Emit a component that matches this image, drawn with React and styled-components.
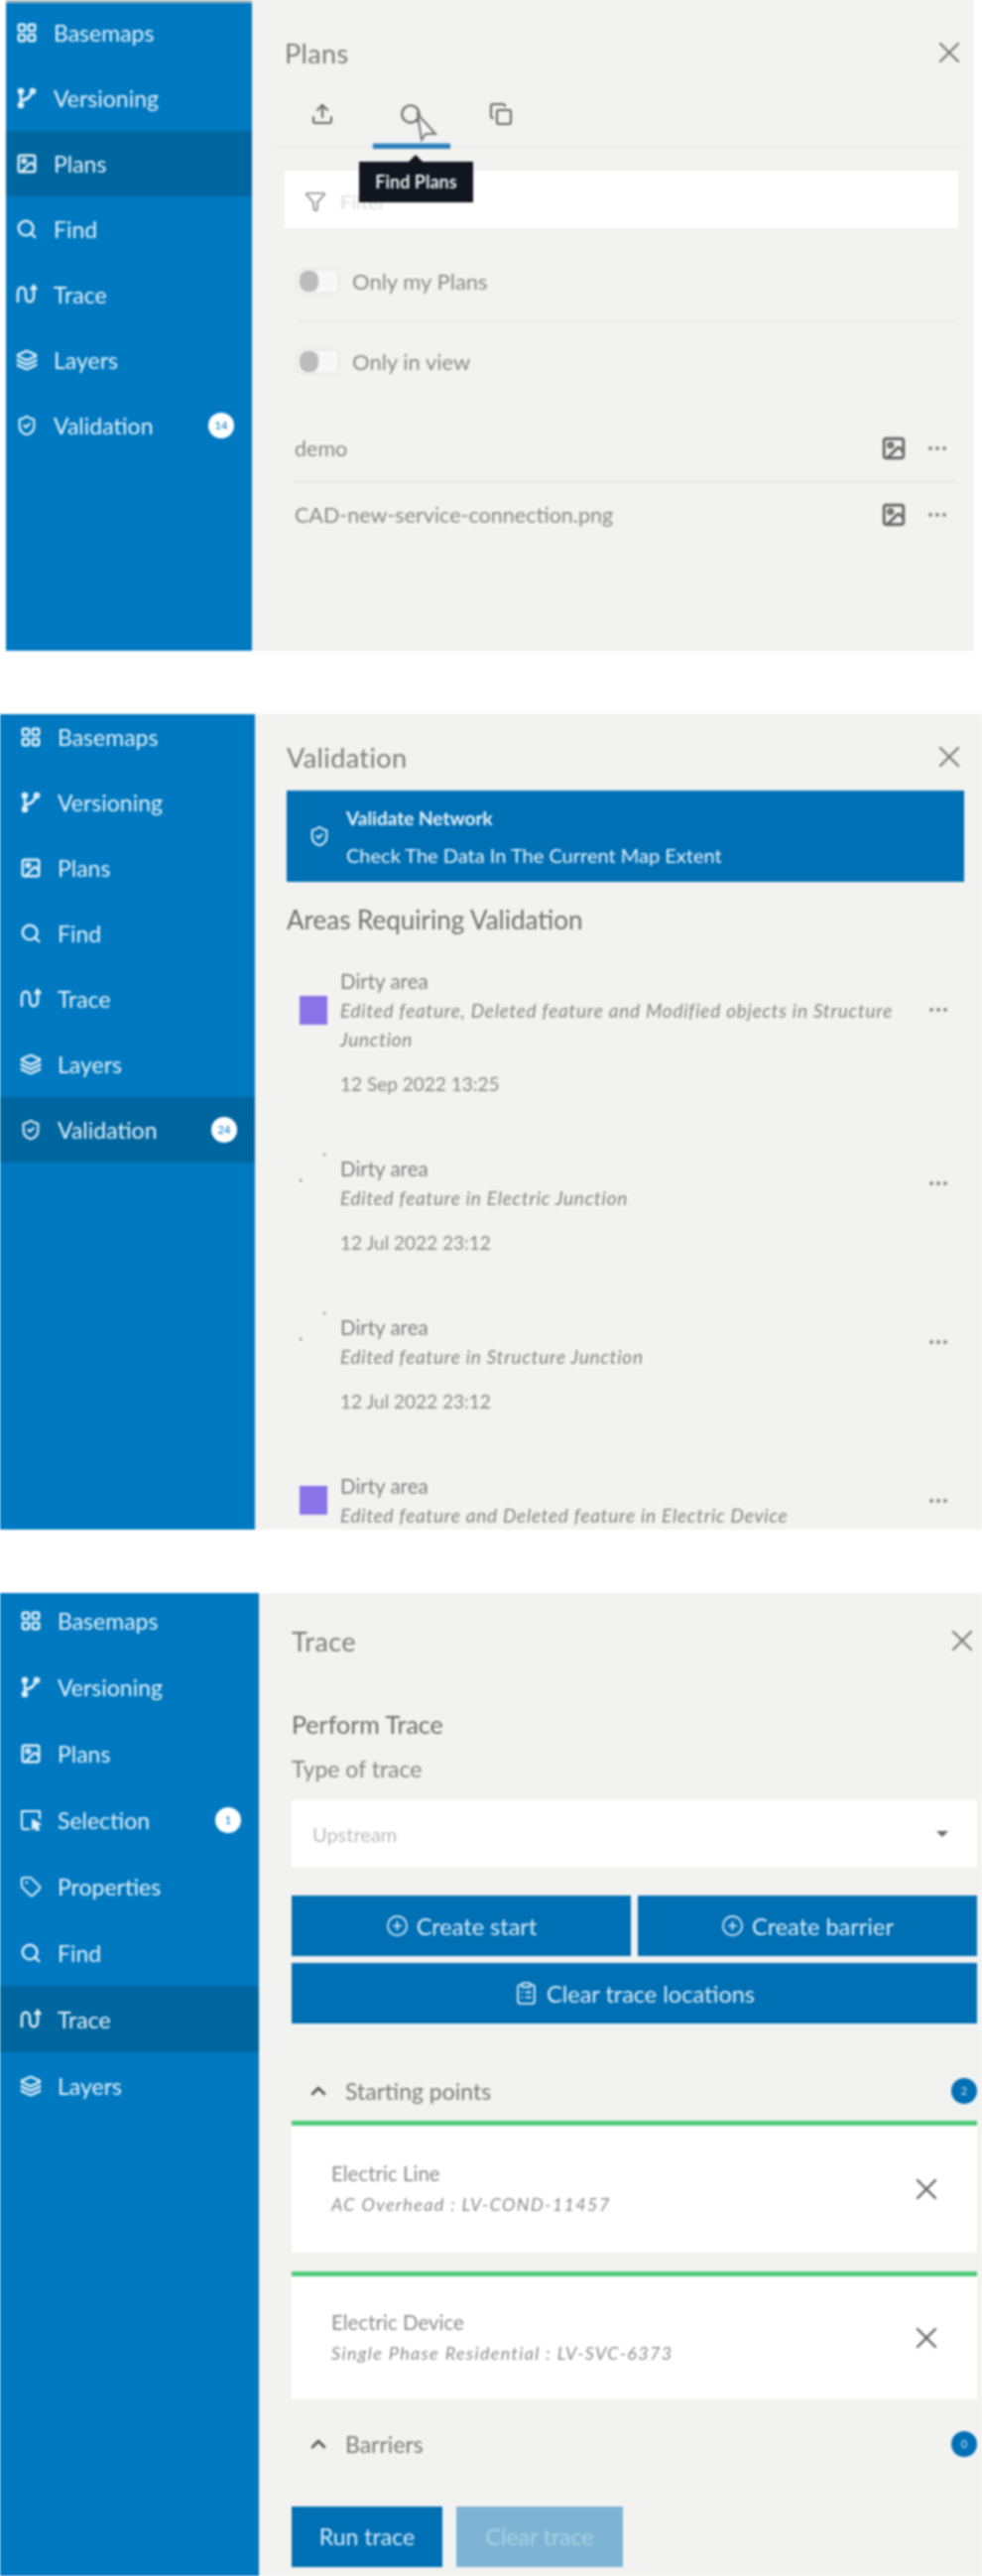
import styled, { createGlobalStyle } from 'styled-components'
import {
  ChevronUp,
  CirclePlus,
  ClipboardList,
  Copy,
  Ellipsis,
  Filter,
  Image,
  Layers,
  LayoutGrid,
  Search,
  ShieldCheck,
  Tag,
  Upload,
  X,
} from 'lucide-react'

const GlobalStyle = createGlobalStyle`
  html, body {
    margin: 0;
    background: #fff;
  }
  body {
    font-family: Lato, "Open Sans", sans-serif;
    color: #777;
  }
`

const Frame = styled.section`
  display: flex;
  height: ${(p) => p.$height}px;
  margin: 0 ${(p) => p.$right || 0}px ${(p) => p.$after || 0}px ${(p) => p.$left || 0}px;
  overflow: hidden;
  filter: blur(1px);
`
const Rail = styled.nav`
  flex: 0 0 ${(p) => p.$width}px;
  background: #0079c1;
  border-top: ${(p) => (p.$strip ? '3px solid #9fb6c2' : 'none')};
`
const RailList = styled.div`
  margin-top: ${(p) => p.$shift}px;
`
const RailItem = styled.div`
  display: flex;
  align-items: center;
  gap: 16px;
  height: ${(p) => p.$pitch}px;
  padding: 0 18px 0 ${(p) => p.$inset}px;
  background: ${(p) => (p.$active ? '#00669f' : 'transparent')};
  color: #e4f1f8;
  font-size: 23px;
`
const RailLabel = styled.span`
  flex: 1;
`
const Count = styled.span`
  width: 26px;
  height: 26px;
  border-radius: 50%;
  background: #fff;
  color: #0079c1;
  font-size: 11px;
  line-height: 26px;
  text-align: center;
`
const Panel = styled.div`
  flex: 1;
  min-width: 0;
  padding: 0 ${(p) => p.$right}px 0 ${(p) => p.$left}px;
  background: #f2f2f1;
`
const Header = styled.header`
  display: flex;
  align-items: center;
  justify-content: space-between;
  height: 40px;
  margin-top: ${(p) => p.$top}px;
  font-size: 27px;
  letter-spacing: 0.4px;
  color: #7d7d7d;
`
const CloseIcon = styled(X)`
  margin-right: -3px;
`
const Tabs = styled.div`
  display: flex;
  height: 75px;
  margin-left: -11px;
  padding-left: 4px;
  border-bottom: 1px solid #e3e3e3;
  box-sizing: border-box;
`
const Tab = styled.div`
  position: relative;
  flex: 0 0 90px;
  display: flex;
  justify-content: center;
  padding-top: 30px;
  color: #666;
`
const TabMark = styled.span`
  position: absolute;
  left: 6px;
  right: 6px;
  bottom: -3px;
  height: 5px;
  background: #2a7fb8;
  box-shadow: 0 -1px 0 #9fd0ee;
`
const Pointer = styled.svg`
  position: absolute;
  left: 48px;
  top: 40px;
`
const Tip = styled.div`
  position: absolute;
  z-index: 2;
  left: -8px;
  top: 90px;
  width: 115px;
  height: 41px;
  background: #10151f;
  color: #e9ecef;
  font-size: 18px;
  font-weight: 700;
  line-height: 41px;
  text-align: center;

  &::before {
    content: '';
    position: absolute;
    left: 50px;
    top: -7px;
    border-left: 7px solid transparent;
    border-right: 7px solid transparent;
    border-bottom: 7px solid #10151f;
  }
`
const SearchBox = styled.div`
  display: flex;
  align-items: center;
  gap: 14px;
  height: 58px;
  margin: 24px 6px 13px 0;
  padding: 4px 0 0 20px;
  box-sizing: border-box;
  background: #fff;
  color: #888;
  font-size: 20px;
`
const SearchHint = styled.span`
  color: #dcdcdc;
`
const ToggleRow = styled.div`
  display: flex;
  align-items: center;
  gap: 13px;
  height: 80px;
  margin-left: 12px;
  margin-right: 7px;
  border-bottom: ${(p) => (p.$line ? '1px solid #e4e4e4' : 'none')};
  font-size: 22px;
  color: #8a8a8a;
`
const Toggle = styled.span`
  position: relative;
  width: 43px;
  height: 25px;
  background: #f7f7f7;
  border: 1px solid #dedede;
  border-radius: 4px;
  box-sizing: border-box;

  &::before {
    content: '';
    position: absolute;
    left: 2px;
    top: 1px;
    width: 19px;
    height: 21px;
    border-radius: 8px;
    background: #bcbcbc;
  }
`
const PlanList = styled.div`
  margin: 15px 7px 0 10px;
`
const PlanRow = styled.div`
  display: flex;
  align-items: center;
  gap: 19px;
  height: 66px;
  border-bottom: ${(p) => (p.$line ? '1px solid #dcdcdc' : 'none')};
  font-size: 21.5px;
  color: #8a8a8a;
`
const Grow = styled.span`
  flex: 1;
`
const ValidateButton = styled.div`
  display: flex;
  align-items: center;
  gap: 16px;
  height: 92px;
  margin-top: 14px;
  padding-left: 22px;
  background: #0070b5;
  color: #e8f3fa;
`
const ValidateTitle = styled.div`
  font-size: 19px;
  font-weight: 700;
  line-height: 20px;
  margin-bottom: 17px;
`
const ValidateText = styled.div`
  font-size: 20px;
  line-height: 20px;
`
const SectionTitle = styled.h2`
  margin: ${(p) => p.$top}px 0 0;
  font-size: 26px;
  font-weight: 400;
  line-height: 30px;
  color: #6f6f6f;
`
const AreaList = styled.div`
  margin-top: 32px;
`
const Area = styled.article`
  margin-bottom: 55px;
  padding-left: 13px;
`
const AreaMain = styled.div`
  display: flex;
  align-items: center;
  gap: 13px;
`
const Swatch = styled.span`
  flex: 0 0 28px;
  height: ${(p) => (p.$filled ? 29 : 59)}px;
  background: ${(p) =>
    p.$filled
      ? '#8a72e8'
      : 'radial-gradient(circle at 1px 27px, #999 1px, transparent 2px), radial-gradient(circle at 25px 1px, #aaa 1px, transparent 2px)'};
`
const AreaText = styled.div`
  flex: 1;
  min-width: 0;
`
const AreaName = styled.div`
  font-size: 20.5px;
  line-height: 30px;
  color: #808080;
`
const AreaDesc = styled.div`
  width: 575px;
  font-size: 19px;
  font-style: italic;
  line-height: 29px;
  letter-spacing: 0.75px;
  color: #858585;
`
const AreaDate = styled.div`
  margin: 16px 0 0 41px;
  font-size: 19px;
  line-height: 30px;
  color: #8a8a8a;
`
const Dots = styled.span`
  display: flex;
  margin-right: ${(p) => p.$right || 0}px;
  color: #888;
`
const Label = styled.div`
  margin-top: ${(p) => p.$top}px;
  font-size: ${(p) => p.$size}px;
  line-height: 30px;
  color: ${(p) => p.$color};
`
const Select = styled.div`
  display: flex;
  align-items: center;
  justify-content: space-between;
  height: 67px;
  margin-top: 17px;
  padding: 0 29px 0 21px;
  box-sizing: border-box;
  background: #fff;
  font-size: 20px;
  color: #bcbcbc;
`
const Caret = styled.span`
  border-left: 6px solid transparent;
  border-right: 6px solid transparent;
  border-top: 6px solid #666;
`
const ActionGrid = styled.div`
  display: grid;
  grid-template-columns: 1fr 1fr;
  gap: 7px;
  margin-top: 29px;
`
const Action = styled.div`
  display: flex;
  align-items: center;
  justify-content: center;
  gap: 8px;
  grid-column: ${(p) => (p.$wide ? '1 / 3' : 'auto')};
  height: 61px;
  background: #0070b5;
  color: #d8ebf6;
  font-size: 23.5px;
`
const Section = styled.div`
  display: flex;
  align-items: center;
  height: 30px;
  margin-top: ${(p) => p.$top}px;
  padding-left: 15px;
  font-size: 23px;
  color: #7a7a7a;
`
const SectionName = styled.span`
  flex: 1;
  margin-left: 15px;
`
const SmallCount = styled.span`
  width: 26px;
  height: 26px;
  border-radius: 50%;
  background: #0070b5;
  color: #cfe6f4;
  font-size: 11px;
  line-height: 26px;
  text-align: center;
`
const Card = styled.div`
  display: flex;
  align-items: center;
  justify-content: space-between;
  height: ${(p) => p.$height}px;
  margin-top: ${(p) => p.$top}px;
  padding: 0 33px 0 40px;
  box-sizing: border-box;
  background: #fff;
  border-top: 5px solid #4fcb7a;
  color: #666;
`
const CardName = styled.div`
  font-size: 20.5px;
  line-height: 31px;
  color: #8c8c8c;
`
const CardInfo = styled.div`
  font-size: 18px;
  font-style: italic;
  line-height: 31px;
  letter-spacing: 1.35px;
  color: #8c8c8c;
`
const Footer = styled.div`
  display: flex;
  gap: 14px;
  margin-top: 48px;
`
const TraceButton = styled.div`
  width: ${(p) => p.$width}px;
  height: 61px;
  background: ${(p) => (p.$muted ? '#7db4d4' : '#0070b5')};
  color: ${(p) => (p.$muted ? '#a9d0e6' : '#d8ebf6')};
  font-size: 23px;
  line-height: 61px;
  text-align: center;
`

const VersionIcon = () => (
  <svg width="22" height="22" viewBox="0 0 22 22" fill="none" stroke="currentColor" strokeWidth="2.6">
    <path d="M5 2v18M5 13c5 0 10-2 11-10" />
    <circle cx="5" cy="18" r="2" />
    <circle cx="5" cy="4" r="2" />
    <circle cx="17" cy="4" r="2" />
  </svg>
)

const TraceIcon = () => (
  <svg width="22" height="22" viewBox="0 0 22 22" fill="none" stroke="currentColor" strokeWidth="2.4">
    <path d="M2 19V9c0-7 8-7 8 0v4c0 7 8 7 8 0V3" />
    <path d="M15 6l3-4 3 4" />
  </svg>
)

const SelectionIcon = () => (
  <svg width="22" height="24" viewBox="0 0 22 24" fill="none" stroke="currentColor" strokeWidth="2">
    <path d="M2 20V3h18v8M2 21h8" />
    <path d="M13 12l7 4-3 1 2 4-2 1-2-4-2 2z" fill="currentColor" />
  </svg>
)

const railIcons = {
  Basemaps: <LayoutGrid size={22} strokeWidth={2.6} />,
  Versioning: <VersionIcon />,
  Plans: <Image size={22} strokeWidth={2.6} />,
  Selection: <SelectionIcon />,
  Properties: <Tag size={22} strokeWidth={2} />,
  Find: <Search size={22} strokeWidth={2.6} />,
  Trace: <TraceIcon />,
  Layers: <Layers size={22} strokeWidth={2.6} />,
  Validation: <ShieldCheck size={22} strokeWidth={2.2} />,
}

function Sidebar({ width, shift, pitch, inset, items, active, counts = {}, strip }) {
  return (
    <Rail $width={width} $strip={strip}>
      <RailList $shift={shift}>
        {items.map((name) => (
          <RailItem key={name} $pitch={pitch} $inset={inset} $active={name === active}>
            {railIcons[name]}
            <RailLabel>{name}</RailLabel>
            {counts[name] && <Count>{counts[name]}</Count>}
          </RailItem>
        ))}
      </RailList>
    </Rail>
  )
}

function Title({ children, top }) {
  return (
    <Header $top={top}>
      {children}
      <CloseIcon size={36} strokeWidth={1.5} />
    </Header>
  )
}

function PlansPanel() {
  return (
    <Panel $left={33} $right={10}>
      <Title top={33}>Plans</Title>
      <Tabs>
        <Tab>
          <Upload size={24} strokeWidth={2} />
        </Tab>
        <Tab>
          <Search size={26} strokeWidth={2} />
          <Pointer width="24" height="30" viewBox="0 0 24 30">
            <path d="M3 2l18 20H11l-4 6z" fill="#f7f7f7" stroke="#777" strokeWidth="2" />
          </Pointer>
          <TabMark />
          <Tip>Find Plans</Tip>
        </Tab>
        <Tab>
          <Copy size={24} strokeWidth={2} />
        </Tab>
      </Tabs>
      <SearchBox>
        <Filter size={22} strokeWidth={1.8} />
        <SearchHint>Filter</SearchHint>
      </SearchBox>
      <ToggleRow $line>
        <Toggle />
        Only my Plans
      </ToggleRow>
      <ToggleRow>
        <Toggle />
        Only in view
      </ToggleRow>
      <PlanList>
        {['demo', 'CAD-new-service-connection.png'].map((name, i) => (
          <PlanRow key={name} $line={i === 0}>
            <Grow>{name}</Grow>
            <Image size={26} strokeWidth={2.6} color="#666" />
            <Dots $right={8}>
              <Ellipsis size={24} />
            </Dots>
          </PlanRow>
        ))}
      </PlanList>
    </Panel>
  )
}

const areas = [
  {
    desc: 'Edited feature, Deleted feature and Modified objects in Structure Junction',
    date: '12 Sep 2022 13:25',
    filled: true,
  },
  { desc: 'Edited feature in Electric Junction', date: '12 Jul 2022 23:12' },
  { desc: 'Edited feature in Structure Junction', date: '12 Jul 2022 23:12' },
  { desc: 'Edited feature and Deleted feature in Electric Device', filled: true },
]

function ValidationPanel() {
  return (
    <Panel $left={32} $right={18}>
      <Title top={23}>Validation</Title>
      <ValidateButton>
        <ShieldCheck size={22} strokeWidth={2} />
        <div>
          <ValidateTitle>Validate Network</ValidateTitle>
          <ValidateText>Check The Data In The Current Map Extent</ValidateText>
        </div>
      </ValidateButton>
      <SectionTitle $top={23}>Areas Requiring Validation</SectionTitle>
      <AreaList>
        {areas.map((area) => (
          <Area key={area.desc}>
            <AreaMain>
              <Swatch $filled={area.filled} />
              <AreaText>
                <AreaName>Dirty area</AreaName>
                <AreaDesc>{area.desc}</AreaDesc>
              </AreaText>
              <Dots $right={14}>
                <Ellipsis size={24} />
              </Dots>
            </AreaMain>
            {area.date && <AreaDate>{area.date}</AreaDate>}
          </Area>
        ))}
      </AreaList>
    </Panel>
  )
}

function TracePanel() {
  return (
    <Panel $left={33} $right={5}>
      <Title top={28}>Trace</Title>
      <Label $top={49} $size={25} $color="#6d6d6d">
        Perform Trace
      </Label>
      <Label $top={15} $size={23} $color="#858585">
        Type of trace
      </Label>
      <Select>
        Upstream
        <Caret />
      </Select>
      <ActionGrid>
        <Action>
          <CirclePlus size={23} strokeWidth={1.8} />
          Create start
        </Action>
        <Action>
          <CirclePlus size={23} strokeWidth={1.8} />
          Create barrier
        </Action>
        <Action $wide>
          <ClipboardList size={25} strokeWidth={1.8} />
          Clear trace locations
        </Action>
      </ActionGrid>
      <Section $top={53}>
        <ChevronUp size={24} strokeWidth={2.6} color="#555" />
        <SectionName>Starting points</SectionName>
        <SmallCount>2</SmallCount>
      </Section>
      <Card $height={133} $top={15}>
        <div>
          <CardName>Electric Line</CardName>
          <CardInfo>AC Overhead : LV-COND-11457</CardInfo>
        </div>
        <X size={36} strokeWidth={1.6} />
      </Card>
      <Card $height={129} $top={19}>
        <div>
          <CardName>Electric Device</CardName>
          <CardInfo>Single Phase Residential : LV-SVC-6373</CardInfo>
        </div>
        <X size={36} strokeWidth={1.6} />
      </Card>
      <Section $top={30}>
        <ChevronUp size={24} strokeWidth={2.6} color="#555" />
        <SectionName>Barriers</SectionName>
        <SmallCount>0</SmallCount>
      </Section>
      <Footer>
        <TraceButton $width={152}>Run trace</TraceButton>
        <TraceButton $width={168} $muted>
          Clear trace
        </TraceButton>
      </Footer>
    </Panel>
  )
}

export default function App() {
  return (
    <>
      <GlobalStyle />
      <Frame $height={656} $after={64} $left={6} $right={8}>
        <Sidebar
          width={248}
          shift={-3}
          pitch={66}
          inset={10}
          strip
          active="Plans"
          counts={{ Validation: '14' }}
          items={['Basemaps', 'Versioning', 'Plans', 'Find', 'Trace', 'Layers', 'Validation']}
        />
        <PlansPanel />
      </Frame>
      <Frame $height={822} $after={64}>
        <Sidebar
          width={257}
          shift={-10}
          pitch={66}
          inset={20}
          active="Validation"
          counts={{ Validation: '24' }}
          items={['Basemaps', 'Versioning', 'Plans', 'Find', 'Trace', 'Layers', 'Validation']}
        />
        <ValidationPanel />
      </Frame>
      <Frame $height={991}>
        <Sidebar
          width={261}
          shift={-6}
          pitch={67}
          inset={20}
          active="Trace"
          counts={{ Selection: '1' }}
          items={['Basemaps', 'Versioning', 'Plans', 'Selection', 'Properties', 'Find', 'Trace', 'Layers']}
        />
        <TracePanel />
      </Frame>
    </>
  )
}
